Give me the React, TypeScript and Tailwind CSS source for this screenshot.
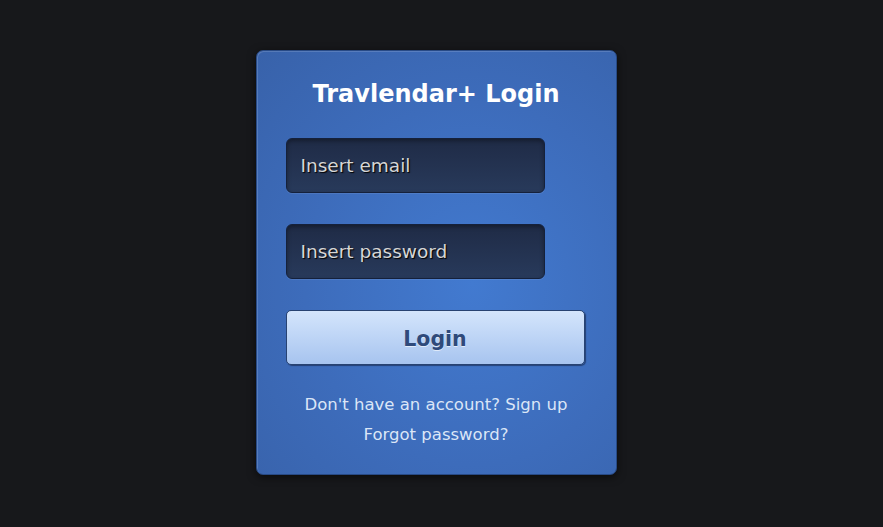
const fieldClass =
  "h-[55px] w-[259px] rounded-[6px] border border-[#15213b] bg-gradient-to-b from-[#1f2b46] to-[#283a5b] px-[14px] text-[18.5px] text-[#d6d6d6] [text-shadow:1px_1px_1px_#000] shadow-[inset_0_2px_4px_rgba(0,0,0,0.35),0_1px_0_rgba(255,255,255,0.08)] outline-none placeholder:text-[#d6d6d6]";

export default function App() {
  return (
    <div className="flex h-[527px] w-full items-start justify-center bg-[#17181b] pt-[50px] font-['DejaVu_Sans',sans-serif]">
      <div className="mr-[11px] flex w-[361px] flex-col rounded-[7px] border border-[#284a85] bg-[radial-gradient(ellipse_at_60%_55%,#427ad0_0%,#3d6cbb_55%,#3862aa_100%)] px-[29px] pb-[24px] pt-[27px] shadow-[inset_1px_1px_0_rgba(255,255,255,0.15),0_2px_8px_rgba(0,0,0,0.6)]">
        <h1 className="text-center text-[24px] font-bold leading-[32px] text-white">
          Travlendar+ Login
        </h1>
        <input className={`mt-[28px] ${fieldClass}`} placeholder="Insert email" />
        <input
          type="password"
          className={`mt-[31px] ${fieldClass}`}
          placeholder="Insert password"
        />
        <button className="mt-[31px] h-[55px] w-[299px] rounded-[5px] border-[1.5px] border-[#284372] bg-gradient-to-b from-[#d4e5fc] to-[#a7c4ef] pt-[3px] text-[20.5px] font-bold text-[#2f4a7b] [text-shadow:0_1px_0_rgba(255,255,255,0.6)] shadow-[1px_1px_1px_rgba(20,35,70,0.6)]">
          Login
        </button>
        <div className="mt-[25px] flex flex-col items-center text-[16.5px] leading-[30px] text-[#dbe6f7]">
          <a className="cursor-pointer">Don't have an account? Sign up</a>
          <a className="cursor-pointer">Forgot password?</a>
        </div>
      </div>
    </div>
  );
}
